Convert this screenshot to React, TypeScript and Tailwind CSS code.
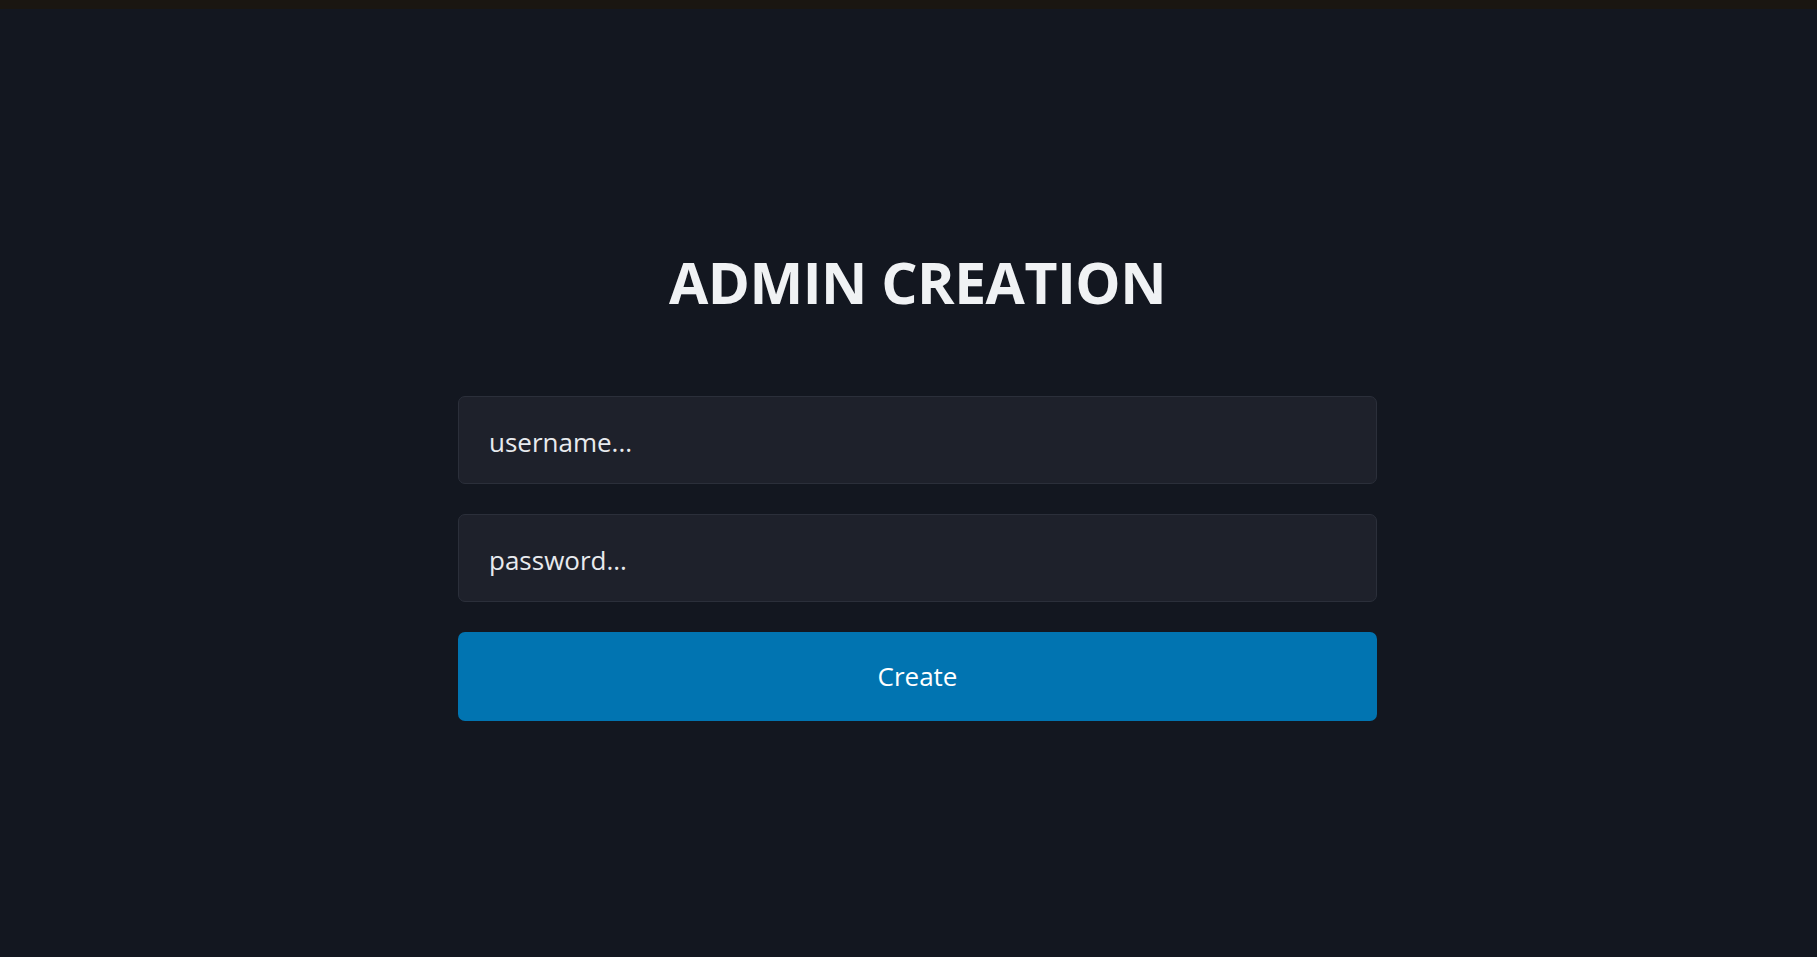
import React from "react";

export default function App() {
  return (
    <div
      className="min-h-screen w-full bg-[#131720] flex flex-col"
      style={{ fontFamily: '"Open Sans", "Noto Sans", sans-serif' }}
    >
      <div className="h-[9px] w-full bg-[#1a1611]" />
      <div className="flex flex-col items-center pl-[18px] pt-[237px]">
        <h1 className="text-[57px] leading-[72px] font-bold text-[#f0f2f4] tracking-[-0.5px]">
          ADMIN CREATION
        </h1>
        <form className="mt-[78px] w-[919px] flex flex-col gap-[30px]" onSubmit={(e) => e.preventDefault()}>
          <input
            type="text"
            placeholder="username..."
            className="h-[88px] w-full rounded-[7px] border border-[#2b2f3a] bg-[#1e212b] px-[30px] pt-[3px] text-[26px] text-[#e8eaee] placeholder:text-[#e8eaee] outline-none"
          />
          <input
            type="password"
            placeholder="password..."
            className="h-[88px] w-full rounded-[7px] border border-[#2b2f3a] bg-[#1e212b] px-[30px] pt-[3px] text-[26px] text-[#e8eaee] placeholder:text-[#e8eaee] outline-none"
          />
          <button
            type="submit"
            className="h-[89px] w-full rounded-[7px] bg-[#0174b1] text-[26px] text-white"
          >
            Create
          </button>
        </form>
      </div>
    </div>
  );
}
